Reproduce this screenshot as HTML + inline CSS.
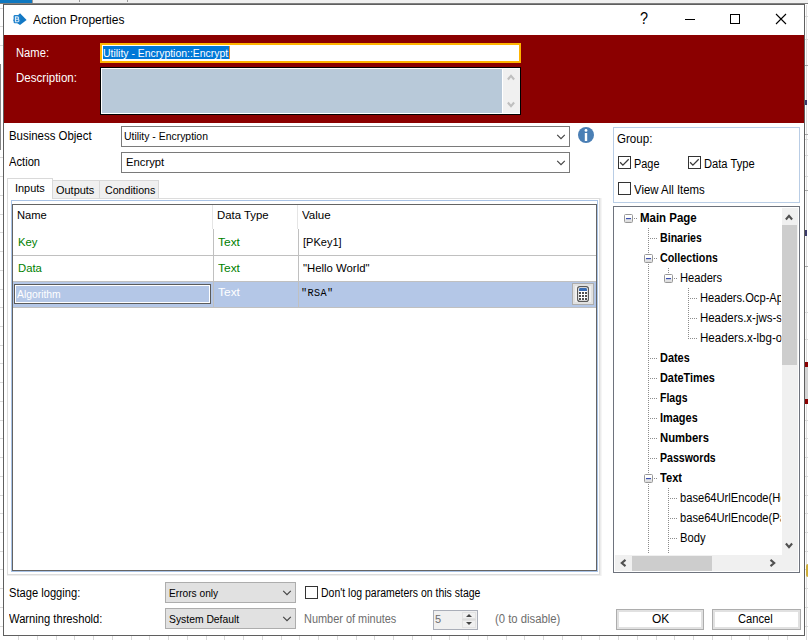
<!DOCTYPE html>
<html><head><meta charset="utf-8">
<style>
*{box-sizing:border-box;margin:0;padding:0}
html,body{width:808px;height:640px;overflow:hidden;background:#fff}
body{position:relative;font-family:"Liberation Sans",sans-serif;font-size:12px;color:#000}
.a{position:absolute}
.t{position:absolute;white-space:nowrap;line-height:14px;height:14px}
.s{font-size:12.5px}
.mono{font-family:"Liberation Mono",monospace;font-size:10.2px}
.m{font-size:11px}
.b{font-weight:bold}
.hl{position:absolute;background:#e4e4e4}
.vl{position:absolute;background:#d8d8d8}
.cb{position:absolute;width:13px;height:13px;border:1px solid #333;background:#fff}
.tl{position:absolute;width:1px;background:repeating-linear-gradient(to bottom,#8c8c8c 0,#8c8c8c 1px,transparent 1px,transparent 2px)}
.th{position:absolute;height:1px;background:repeating-linear-gradient(to right,#8c8c8c 0,#8c8c8c 1px,transparent 1px,transparent 2px)}
.ex{position:absolute;width:9px;height:9px;border:1px solid #989898;border-radius:1.5px;background:linear-gradient(#fff 30%,#d8d8d8)}
.ex:after{content:"";position:absolute;left:1px;top:3px;width:5px;height:1px;background:#3a50b0;box-shadow:0 0.5px 0 rgba(58,80,176,.4)}
</style></head><body>
<!-- background app remnants -->
<div class="a" style="left:0;top:0;width:808px;height:3px;background:#f0f0f0"></div>
<div class="a" style="left:0;top:0;width:32px;height:3px;background:#0f78c0"></div>
<div class="a" style="left:0;top:3px;width:808px;height:1px;background:#808080"></div>
<div class="a" style="left:32px;top:0;width:1px;height:3px;background:#9a9a9a"></div>
<div class="a" style="left:79px;top:0;width:1px;height:2px;background:#9a9a9a"></div>
<div class="a" style="left:127px;top:0;width:1px;height:2px;background:#9a9a9a"></div>
<div class="a" style="left:806px;top:5px;width:1px;height:635px;background:#dedede"></div>
<div class="a" style="left:0;top:8px;width:3px;height:1px;background:#d9d9d9"></div>
<div class="a" style="left:0;top:26px;width:3px;height:1px;background:#d9d9d9"></div>
<div class="a" style="left:0;top:45px;width:3px;height:1px;background:#d9d9d9"></div>
<div class="a" style="left:0;top:157px;width:3px;height:1px;background:#d9d9d9"></div>
<div class="a" style="left:0;top:176px;width:3px;height:1px;background:#d9d9d9"></div>
<div class="a" style="left:0;top:195px;width:3px;height:1px;background:#d9d9d9"></div>
<div class="a" style="left:0;top:214px;width:3px;height:1px;background:#d9d9d9"></div>
<div class="a" style="left:0;top:232px;width:3px;height:1px;background:#d9d9d9"></div>
<div class="a" style="left:0;top:251px;width:3px;height:1px;background:#d9d9d9"></div>
<div class="a" style="left:0;top:270px;width:3px;height:1px;background:#d9d9d9"></div>
<div class="a" style="left:0;top:289px;width:3px;height:1px;background:#d9d9d9"></div>
<div class="a" style="left:0;top:307px;width:3px;height:1px;background:#d9d9d9"></div>
<div class="a" style="left:0;top:326px;width:3px;height:1px;background:#d9d9d9"></div>
<div class="a" style="left:0;top:345px;width:3px;height:1px;background:#d9d9d9"></div>
<div class="a" style="left:0;top:363px;width:3px;height:1px;background:#d9d9d9"></div>
<div class="a" style="left:0;top:382px;width:3px;height:1px;background:#d9d9d9"></div>
<div class="a" style="left:0;top:401px;width:3px;height:1px;background:#d9d9d9"></div>
<div class="a" style="left:0;top:420px;width:3px;height:1px;background:#d9d9d9"></div>
<div class="a" style="left:805px;top:420px;width:3px;height:1px;background:#d9d9d9"></div>
<div class="a" style="left:0;top:438px;width:3px;height:1px;background:#d9d9d9"></div>
<div class="a" style="left:805px;top:438px;width:3px;height:1px;background:#d9d9d9"></div>
<div class="a" style="left:0;top:457px;width:3px;height:1px;background:#d9d9d9"></div>
<div class="a" style="left:805px;top:457px;width:3px;height:1px;background:#d9d9d9"></div>
<div class="a" style="left:0;top:476px;width:3px;height:1px;background:#d9d9d9"></div>
<div class="a" style="left:805px;top:476px;width:3px;height:1px;background:#d9d9d9"></div>
<div class="a" style="left:0;top:495px;width:3px;height:1px;background:#d9d9d9"></div>
<div class="a" style="left:805px;top:495px;width:3px;height:1px;background:#d9d9d9"></div>
<div class="a" style="left:0;top:513px;width:3px;height:1px;background:#d9d9d9"></div>
<div class="a" style="left:805px;top:513px;width:3px;height:1px;background:#d9d9d9"></div>
<div class="a" style="left:0;top:532px;width:3px;height:1px;background:#d9d9d9"></div>
<div class="a" style="left:805px;top:532px;width:3px;height:1px;background:#d9d9d9"></div>
<div class="a" style="left:0;top:551px;width:3px;height:1px;background:#d9d9d9"></div>
<div class="a" style="left:805px;top:551px;width:3px;height:1px;background:#d9d9d9"></div>
<div class="a" style="left:0;top:569px;width:3px;height:1px;background:#d9d9d9"></div>
<div class="a" style="left:805px;top:569px;width:3px;height:1px;background:#d9d9d9"></div>
<div class="a" style="left:0;top:588px;width:3px;height:1px;background:#d9d9d9"></div>
<div class="a" style="left:805px;top:588px;width:3px;height:1px;background:#d9d9d9"></div>
<div class="a" style="left:0;top:607px;width:3px;height:1px;background:#d9d9d9"></div>
<div class="a" style="left:805px;top:607px;width:3px;height:1px;background:#d9d9d9"></div>
<div class="a" style="left:0;top:626px;width:3px;height:1px;background:#d9d9d9"></div>
<div class="a" style="left:805px;top:626px;width:3px;height:1px;background:#d9d9d9"></div>
<div class="a" style="left:805px;top:16px;width:3px;height:1px;background:#d9d9d9"></div>
<div class="a" style="left:805px;top:39px;width:3px;height:1px;background:#d9d9d9"></div>
<div class="a" style="left:805px;top:65px;width:3px;height:1px;background:#a8a8a8"></div>
<div class="a" style="left:805px;top:134px;width:3px;height:1px;background:#a8a8a8"></div>
<div class="a" style="left:805px;top:139px;width:3px;height:1px;background:#d9d9d9"></div>
<div class="a" style="left:805px;top:155px;width:3px;height:1px;background:#d9d9d9"></div>
<div class="a" style="left:805px;top:176px;width:3px;height:1px;background:#d9d9d9"></div>
<div class="a" style="left:805px;top:190px;width:3px;height:1px;background:#a8a8a8"></div>
<div class="a" style="left:805px;top:266px;width:3px;height:1px;background:#a8a8a8"></div>
<div class="a" style="left:805px;top:312px;width:3px;height:1px;background:#d9d9d9"></div>
<div class="a" style="left:805px;top:339px;width:3px;height:1px;background:#d9d9d9"></div>
<div class="a" style="left:0;top:64px;width:1px;height:86px;background:#858585"></div>
<div class="a" style="left:805px;top:362px;width:3px;height:42px;background:#8b0000"></div>
<div class="a" style="left:805px;top:367px;width:3px;height:32px;background:#d4d4d4"></div>
<div class="a" style="left:805px;top:100px;width:2px;height:5px;background:#3a3a6a"></div>
<div class="a" style="left:805px;top:230px;width:2px;height:6px;background:#3a3a6a"></div>
<div class="a" style="left:806px;top:564px;width:2px;height:13px;background:#cfae3a;border-radius:2px 0 0 2px"></div>
<div class="a" style="left:18px;top:636px;width:1px;height:4px;background:#d9d9d9"></div>
<div class="a" style="left:37px;top:636px;width:1px;height:4px;background:#d9d9d9"></div>
<div class="a" style="left:56px;top:636px;width:1px;height:4px;background:#d9d9d9"></div>
<div class="a" style="left:74px;top:636px;width:1px;height:4px;background:#d9d9d9"></div>
<div class="a" style="left:93px;top:636px;width:1px;height:4px;background:#d9d9d9"></div>
<div class="a" style="left:112px;top:636px;width:1px;height:4px;background:#d9d9d9"></div>
<div class="a" style="left:131px;top:636px;width:1px;height:4px;background:#d9d9d9"></div>
<div class="a" style="left:149px;top:636px;width:1px;height:4px;background:#d9d9d9"></div>
<div class="a" style="left:168px;top:636px;width:1px;height:4px;background:#d9d9d9"></div>
<div class="a" style="left:187px;top:636px;width:1px;height:4px;background:#d9d9d9"></div>
<div class="a" style="left:206px;top:636px;width:1px;height:4px;background:#d9d9d9"></div>
<div class="a" style="left:224px;top:636px;width:1px;height:4px;background:#d9d9d9"></div>
<div class="a" style="left:243px;top:636px;width:1px;height:4px;background:#d9d9d9"></div>
<div class="a" style="left:262px;top:636px;width:1px;height:4px;background:#d9d9d9"></div>
<div class="a" style="left:281px;top:636px;width:1px;height:4px;background:#d9d9d9"></div>
<div class="a" style="left:299px;top:636px;width:1px;height:4px;background:#d9d9d9"></div>
<div class="a" style="left:318px;top:636px;width:1px;height:4px;background:#d9d9d9"></div>
<div class="a" style="left:337px;top:636px;width:1px;height:4px;background:#d9d9d9"></div>
<div class="a" style="left:356px;top:636px;width:1px;height:4px;background:#d9d9d9"></div>
<div class="a" style="left:374px;top:636px;width:1px;height:4px;background:#d9d9d9"></div>
<div class="a" style="left:393px;top:636px;width:1px;height:4px;background:#d9d9d9"></div>
<div class="a" style="left:412px;top:636px;width:1px;height:4px;background:#d9d9d9"></div>
<div class="a" style="left:431px;top:636px;width:1px;height:4px;background:#d9d9d9"></div>
<div class="a" style="left:449px;top:636px;width:1px;height:4px;background:#d9d9d9"></div>
<div class="a" style="left:468px;top:636px;width:1px;height:4px;background:#d9d9d9"></div>
<div class="a" style="left:487px;top:636px;width:1px;height:4px;background:#d9d9d9"></div>
<div class="a" style="left:506px;top:636px;width:1px;height:4px;background:#d9d9d9"></div>
<div class="a" style="left:524px;top:636px;width:1px;height:4px;background:#d9d9d9"></div>
<div class="a" style="left:543px;top:636px;width:1px;height:4px;background:#d9d9d9"></div>
<div class="a" style="left:562px;top:636px;width:1px;height:4px;background:#d9d9d9"></div>
<div class="a" style="left:581px;top:636px;width:1px;height:4px;background:#d9d9d9"></div>
<div class="a" style="left:599px;top:636px;width:1px;height:4px;background:#d9d9d9"></div>
<div class="a" style="left:618px;top:636px;width:1px;height:4px;background:#d9d9d9"></div>
<div class="a" style="left:637px;top:636px;width:1px;height:4px;background:#d9d9d9"></div>
<div class="a" style="left:656px;top:636px;width:1px;height:4px;background:#d9d9d9"></div>
<div class="a" style="left:674px;top:636px;width:1px;height:4px;background:#d9d9d9"></div>
<div class="a" style="left:693px;top:636px;width:1px;height:4px;background:#d9d9d9"></div>
<div class="a" style="left:712px;top:636px;width:1px;height:4px;background:#d9d9d9"></div>
<div class="a" style="left:731px;top:636px;width:1px;height:4px;background:#d9d9d9"></div>
<div class="a" style="left:749px;top:636px;width:1px;height:4px;background:#d9d9d9"></div>
<div class="a" style="left:768px;top:636px;width:1px;height:4px;background:#d9d9d9"></div>
<div class="a" style="left:787px;top:636px;width:1px;height:4px;background:#d9d9d9"></div>
<div class="a" style="left:806px;top:636px;width:1px;height:4px;background:#d9d9d9"></div>
<!-- dialog frame -->
<div class="a" id="dlg" style="left:3px;top:4px;width:802px;height:632px;border:1px solid #5f5f5f;background:#fff"></div>
<!-- title -->
<svg class="a" style="left:12px;top:12px" width="16" height="15" viewBox="0 0 16 15">
<path d="M8 1.2L14.6 8.1L8 13L1 8.3Z" fill="#1278c4"/>
<rect x="1.6" y="3.1" width="6.8" height="8.2" rx="1.2" fill="#1f82cc"/>
<path d="M3.5 4.9h1.9a1.15 1.15 0 0 1 0 2.3h-1.9zM3.5 7.2h2.2a1.25 1.25 0 0 1 0 2.5h-2.2z" fill="none" stroke="#d6e8f7" stroke-width="1.15"/>
</svg>
<div class="a" style="left:639.5px;top:11px;font-size:16px;line-height:16px;white-space:nowrap;transform:scaleX(0.9);transform-origin:0 0">?</div>
<div class="a" style="left:685px;top:19px;width:10px;height:1px;background:#000"></div>
<div class="a" style="left:730px;top:14px;width:10px;height:10px;border:1px solid #000"></div>
<svg class="a" style="left:775px;top:13px" width="12" height="12" viewBox="0 0 12 12"><path d="M1 1L11 11M11 1L1 11" stroke="#000" stroke-width="1.1" fill="none"/></svg>
<!-- red banner -->
<div class="a" style="left:4px;top:35px;width:800px;height:88px;background:#8b0000"></div>
<div class="a" style="left:100px;top:43px;width:421px;height:20px;border:2px solid #ffb400;background:#fff"></div>
<div class="a" style="left:103px;top:46px;width:126px;height:13px;background:#0078d7"></div><div class="a" style="left:229px;top:46px;width:1px;height:13px;background:#ee8a1e"></div>
<div class="a" style="left:100px;top:67px;width:421px;height:48px;border:1px solid #000;background:#fff"></div>
<div class="a" style="left:102px;top:69px;width:400px;height:44px;background:#b8c9d9"></div>
<div class="a" style="left:503px;top:69px;width:17px;height:44px;background:#f0f0f0"></div>
<svg class="a" style="left:506.6px;top:73.3px" width="8" height="8" viewBox="0 0 8 8"><path d="M0.9 6.5L4 2.8L7.1 6.5" stroke="#bfbfbf" stroke-width="2.1" fill="none"/></svg>
<svg class="a" style="left:506.6px;top:101px" width="8" height="8" viewBox="0 0 8 8"><path d="M0.9 1.5L4 5.2L7.1 1.5" stroke="#bfbfbf" stroke-width="2.1" fill="none"/></svg>
<!-- business object / action -->
<div class="a" style="left:121px;top:126px;width:449px;height:21px;border:1px solid #7a7a7a;background:#fff"></div>
<div class="a" style="left:121px;top:152px;width:449px;height:21px;border:1px solid #7a7a7a;background:#fff"></div>
<svg class="a" style="left:556px;top:134px" width="10" height="6" viewBox="0 0 10 6"><path d="M1.2 0.9L5 4.7L8.8 0.9" stroke="#444" stroke-width="1.15" fill="none"/></svg>
<svg class="a" style="left:556px;top:160px" width="10" height="6" viewBox="0 0 10 6"><path d="M1.2 0.9L5 4.7L8.8 0.9" stroke="#444" stroke-width="1.15" fill="none"/></svg>
<svg class="a" style="left:578px;top:127px" width="16" height="16" viewBox="0 0 16 16"><circle cx="8" cy="8" r="8" fill="#4a7fb5"/><circle cx="8" cy="3.4" r="1.4" fill="#fff"/><rect x="6.8" y="6" width="2.4" height="8" fill="#fff"/></svg>
<!-- tabs -->
<div class="a" style="left:7px;top:198px;width:595px;height:378px;background:#fff;border-left:1px solid #dcdcdc;border-top:1px solid #dcdcdc"></div>
<div class="a" style="left:599px;top:198px;width:1px;height:377px;background:#dcdcdc"></div>
<div class="a" style="left:600px;top:198px;width:1px;height:378px;background:#ebebeb"></div>
<div class="a" style="left:601px;top:198px;width:1px;height:378px;background:#f5f5f5"></div>
<div class="a" style="left:7px;top:574px;width:593px;height:1px;background:#dcdcdc"></div>
<div class="a" style="left:7px;top:575px;width:594px;height:1px;background:#efefef"></div>
<div class="a" style="left:52px;top:180px;width:48px;height:18px;border:1px solid #d9d9d9;border-bottom:none;background:#f0f0f0"></div>
<div class="a" style="left:99px;top:180px;width:60px;height:18px;border:1px solid #d9d9d9;border-bottom:none;background:#f0f0f0"></div>
<div class="a" style="left:7px;top:178px;width:46px;height:21px;border:1px solid #d9d9d9;border-bottom:none;background:#fff"></div>
<!-- list -->
<div class="a" style="left:11px;top:200px;width:587px;height:372px;border:1px solid #a9c3e6;background:#fff"></div>
<div class="a" style="left:12px;top:204px;width:585px;height:367px;border:1px solid #646464;background:#fff"></div>
<div class="a" style="left:212px;top:205px;width:1px;height:24px;background:#e5e5e5"></div>
<div class="a" style="left:297px;top:205px;width:1px;height:24px;background:#e5e5e5"></div>
<div class="a" style="left:213px;top:229px;width:1px;height:78px;background:#c0c0c0"></div>
<div class="a" style="left:298px;top:229px;width:1px;height:78px;background:#c0c0c0"></div>
<div class="a" style="left:13px;top:255px;width:583px;height:1px;background:#c0c0c0"></div>
<div class="a" style="left:13px;top:281px;width:583px;height:1px;background:#c0c0c0"></div>
<div class="a" style="left:13px;top:307px;width:583px;height:1px;background:#c0c0c0"></div>
<div class="a" style="left:13px;top:282px;width:200px;height:25px;background:#b4c7e7"></div>
<div class="a" style="left:214px;top:282px;width:84px;height:25px;background:#b4c7e7"></div>
<div class="a" style="left:299px;top:282px;width:297px;height:25px;background:#b4c7e7"></div>
<div class="a" style="left:14px;top:284px;width:197px;height:20px;border:1px solid #5a5a5a;box-shadow:inset 0 0 0 1px #fff;background:#b4c7e7"></div>
<div class="a" style="left:572px;top:283px;width:22px;height:22px;border:1px solid #adadad;background:#f0f0f0;box-shadow:inset 0 0 0 2px #e1e1e1"></div>
<svg class="a" style="left:577px;top:286px" width="12" height="16" viewBox="0 0 12 16"><rect x="0.6" y="0.6" width="10.8" height="14.8" rx="2.2" fill="#fff" stroke="#5a5a5a" stroke-width="1.2"/><path d="M2 5V3.2a1.2 1.2 0 0 1 1.2-1.2h5.6a1.2 1.2 0 0 1 1.2 1.2V5z" fill="#3a6db5"/>
<g fill="#505050"><rect x="2" y="6" width="2" height="2"/><rect x="5" y="6" width="2" height="2"/><rect x="8" y="6" width="2" height="2"/><rect x="2" y="9" width="2" height="2"/><rect x="5" y="9" width="2" height="2"/><rect x="8" y="9" width="2" height="2"/><rect x="2" y="12" width="2" height="2"/><rect x="5" y="12" width="2" height="2"/><rect x="8" y="12" width="2" height="2"/></g></svg>
<!-- group box -->
<div class="a" style="left:613px;top:127px;width:187px;height:76px;border:1px solid #b9cde5;background:#fff"></div>
<div class="cb" style="left:618px;top:156px"></div>
<div class="cb" style="left:688px;top:156px"></div>
<div class="cb" style="left:618px;top:182px"></div>
<svg class="a" style="left:619px;top:157px" width="11" height="11" viewBox="0 0 11 11"><path d="M1.1 5.3L3.9 8.1L9.7 2.3" stroke="#3a3a3a" stroke-width="1.3" fill="none"/></svg>
<svg class="a" style="left:689px;top:157px" width="11" height="11" viewBox="0 0 11 11"><path d="M1.1 5.3L3.9 8.1L9.7 2.3" stroke="#3a3a3a" stroke-width="1.3" fill="none"/></svg>
<div class="a" style="left:613px;top:206px;width:187px;height:367px;border:1px solid #6e737d;background:#fff"></div>
<!-- bottom -->
<div class="a" style="left:165px;top:582px;width:131px;height:21px;border:1px solid #adadad;background:#e1e1e1"></div>
<div class="a" style="left:165px;top:608px;width:131px;height:21px;border:1px solid #adadad;background:#e1e1e1"></div>
<svg class="a" style="left:282px;top:590px" width="10" height="6" viewBox="0 0 10 6"><path d="M1.2 0.9L5 4.7L8.8 0.9" stroke="#444" stroke-width="1.15" fill="none"/></svg>
<svg class="a" style="left:282px;top:616px" width="10" height="6" viewBox="0 0 10 6"><path d="M1.2 0.9L5 4.7L8.8 0.9" stroke="#444" stroke-width="1.15" fill="none"/></svg>
<div class="cb" style="left:305px;top:586px"></div>
<div class="a" style="left:433px;top:610px;width:45px;height:20px;border:1px solid #aaaeb8;background:#f0f0f0"></div>
<div class="a" style="left:462px;top:612px;width:14px;height:7px;border:1px solid #e2e2e2;background:#f0f0f0"></div>
<div class="a" style="left:462px;top:619px;width:14px;height:1px;background:#dcdcdc"></div>
<div class="a" style="left:462px;top:620px;width:14px;height:8px;border:1px solid #e2e2e2;background:#f0f0f0"></div>
<svg class="a" style="left:465.5px;top:614px" width="6" height="3" viewBox="0 0 6 3"><path d="M0 3L3 0L6 3Z" fill="#444"/></svg>
<svg class="a" style="left:465.5px;top:622px" width="6" height="3" viewBox="0 0 6 3"><path d="M0 0L3 3L6 0Z" fill="#444"/></svg>
<div class="a" style="left:616px;top:609px;width:88px;height:21px;border:1px solid #adadad;background:#fff;box-shadow:inset 0 0 0 2px #e1e1e1"></div>
<div class="a" style="left:712px;top:609px;width:89px;height:21px;border:1px solid #adadad;background:#fff;box-shadow:inset 0 0 0 2px #e1e1e1"></div>

<div class="tl" style="left:648px;top:228px;height:326px"></div>
<div class="tl" style="left:668px;top:268px;height:5px"></div>
<div class="tl" style="left:688px;top:288px;height:51px"></div>
<div class="tl" style="left:668px;top:488px;height:66px"></div>
<div class="th" style="left:634px;top:218px;width:3px"></div>
<div class="ex" style="left:624px;top:214px"></div>
<div class="th" style="left:650px;top:238px;width:7px"></div>
<div class="th" style="left:654px;top:258px;width:3px"></div>
<div class="ex" style="left:644px;top:254px"></div>
<div class="th" style="left:674px;top:278px;width:3px"></div>
<div class="ex" style="left:664px;top:274px"></div>
<div class="th" style="left:690px;top:298px;width:7px"></div>
<div class="th" style="left:690px;top:318px;width:7px"></div>
<div class="th" style="left:690px;top:338px;width:7px"></div>
<div class="th" style="left:650px;top:358px;width:7px"></div>
<div class="th" style="left:650px;top:378px;width:7px"></div>
<div class="th" style="left:650px;top:398px;width:7px"></div>
<div class="th" style="left:650px;top:418px;width:7px"></div>
<div class="th" style="left:650px;top:438px;width:7px"></div>
<div class="th" style="left:650px;top:458px;width:7px"></div>
<div class="th" style="left:654px;top:478px;width:3px"></div>
<div class="ex" style="left:644px;top:474px"></div>
<div class="th" style="left:670px;top:498px;width:7px"></div>
<div class="th" style="left:670px;top:518px;width:7px"></div>
<div class="th" style="left:670px;top:538px;width:7px"></div>
<div class="a" style="left:782px;top:208px;width:16px;height:347px;background:#f0f0f0"></div>
<div class="a" style="left:782px;top:225px;width:15px;height:140px;background:#cdcdcd"></div>
<svg class="a" style="left:785px;top:213px" width="8" height="8" viewBox="0 0 8 8"><path d="M0.9 6.5L4 2.8L7.1 6.5" stroke="#505050" stroke-width="2.1" fill="none"/></svg>
<svg class="a" style="left:785px;top:542px" width="8" height="8" viewBox="0 0 8 8"><path d="M0.9 1.5L4 5.2L7.1 1.5" stroke="#505050" stroke-width="2.1" fill="none"/></svg>
<div class="a" style="left:615px;top:555px;width:183px;height:16px;background:#f0f0f0"></div>
<div class="a" style="left:632px;top:556px;width:80px;height:15px;background:#cdcdcd"></div>
<svg class="a" style="left:619px;top:558.5px" width="8" height="8" viewBox="0 0 8 8"><path d="M6.5 0.9L2.8 4L6.5 7.1" stroke="#505050" stroke-width="2.1" fill="none"/></svg>
<svg class="a" style="left:769px;top:558.5px" width="8" height="8" viewBox="0 0 8 8"><path d="M1.5 0.9L5.2 4L1.5 7.1" stroke="#505050" stroke-width="2.1" fill="none"/></svg>

<span class="t s" id="ttl" style="left:33px;top:13.0px;;display:inline-block;transform-origin:0 50%;transform:scaleX(0.9604);">Action Properties</span>
<span class="t s" id="lname" style="left:16px;top:46.0px;color:#fff;display:inline-block;transform-origin:0 50%;transform:scaleX(0.8963);">Name:</span>
<span class="t s" id="ldesc" style="left:16px;top:71.0px;color:#fff;display:inline-block;transform-origin:0 50%;transform:scaleX(0.9237);">Description:</span>
<span class="t m" id="vname" style="left:103px;top:46.0px;color:#fff;display:inline-block;transform-origin:0 50%;transform:scaleX(0.9480);">Utility - Encryption::Encrypt</span>
<span class="t s" id="lbo" style="left:9px;top:129.0px;;display:inline-block;transform-origin:0 50%;transform:scaleX(0.9142);">Business Object</span>
<span class="t s" id="lact" style="left:9px;top:155.0px;;display:inline-block;transform-origin:0 50%;transform:scaleX(0.8942);">Action</span>
<span class="t m" id="vbo" style="left:124px;top:129.0px;;display:inline-block;transform-origin:0 50%;transform:scaleX(0.9469);">Utility - Encryption</span>
<span class="t m" id="vact" style="left:126px;top:155.0px;;display:inline-block;transform-origin:0 50%;transform:scaleX(1.0248);">Encrypt</span>
<span class="t m" id="tab1" style="left:15px;top:181.0px;;display:inline-block;transform-origin:0 50%;transform:scaleX(0.9925);">Inputs</span>
<span class="t m" id="tab2" style="left:56px;top:183.0px;;display:inline-block;transform-origin:0 50%;transform:scaleX(0.9952);">Outputs</span>
<span class="t m" id="tab3" style="left:105px;top:183.0px;;display:inline-block;transform-origin:0 50%;transform:scaleX(0.9681);">Conditions</span>
<span class="t m" id="h1" style="left:17px;top:208.0px;;display:inline-block;transform-origin:0 50%;transform:scaleX(1.0157);">Name</span>
<span class="t m" id="h2" style="left:217px;top:208.0px;;display:inline-block;transform-origin:0 50%;transform:scaleX(1.0354);">Data Type</span>
<span class="t m" id="h3" style="left:302px;top:208.0px;;display:inline-block;transform-origin:0 50%;transform:scaleX(1.0512);">Value</span>
<span class="t m" id="r1a" style="left:18px;top:235.0px;color:#008000;display:inline-block;transform-origin:0 50%;transform:scaleX(1.0274);">Key</span>
<span class="t m" id="r1b" style="left:218px;top:235.0px;color:#008000;display:inline-block;transform-origin:0 50%;transform:scaleX(1.0874);">Text</span>
<span class="t m" id="r1c" style="left:303px;top:235.0px;;display:inline-block;transform-origin:0 50%;transform:scaleX(1.0013);">[PKey1]</span>
<span class="t m" id="r2a" style="left:18px;top:261.0px;color:#008000;display:inline-block;transform-origin:0 50%;transform:scaleX(1.0266);">Data</span>
<span class="t m" id="r2b" style="left:218px;top:261.0px;color:#008000;display:inline-block;transform-origin:0 50%;transform:scaleX(1.0874);">Text</span>
<span class="t m" id="r2c" style="left:303px;top:261.0px;;display:inline-block;transform-origin:0 50%;transform:scaleX(1.0315);">&quot;Hello World&quot;</span>
<span class="t m" id="r3a" style="left:17px;top:287.0px;color:#fff;display:inline-block;transform-origin:0 50%;transform:scaleX(0.9408);">Algorithm</span>
<span class="t m" id="r3b" style="left:218px;top:285.0px;color:#fff;display:inline-block;transform-origin:0 50%;transform:scaleX(1.0874);">Text</span>
<span class="t mono" id="r3c" style="left:301px;top:287.0px;;letter-spacing:0.372px;">&quot;RSA&quot;</span>
<span class="t s" id="g0" style="left:617px;top:131.5px;;display:inline-block;transform-origin:0 50%;transform:scaleX(0.9247);">Group:</span>
<span class="t s" id="g1" style="left:634px;top:156.5px;;display:inline-block;transform-origin:0 50%;transform:scaleX(0.8716);">Page</span>
<span class="t s" id="g2" style="left:704px;top:156.5px;;display:inline-block;transform-origin:0 50%;transform:scaleX(0.8916);">Data Type</span>
<span class="t s" id="g3" style="left:634px;top:182.5px;;display:inline-block;transform-origin:0 50%;transform:scaleX(0.9122);">View All Items</span>
<span class="t s" id="b1" style="left:9px;top:586.0px;;display:inline-block;transform-origin:0 50%;transform:scaleX(0.8914);">Stage logging:</span>
<span class="t s" id="b2" style="left:9px;top:612.0px;;display:inline-block;transform-origin:0 50%;transform:scaleX(0.8945);">Warning threshold:</span>
<span class="t m" id="b3" style="left:169px;top:586.0px;;display:inline-block;transform-origin:0 50%;transform:scaleX(0.9246);">Errors only</span>
<span class="t m" id="b4" style="left:169px;top:612.0px;;display:inline-block;transform-origin:0 50%;transform:scaleX(0.9409);">System Default</span>
<span class="t s" id="b5" style="left:321px;top:586.0px;;display:inline-block;transform-origin:0 50%;transform:scaleX(0.8391);">Don't log parameters on this stage</span>
<span class="t s" id="b6" style="left:304px;top:612.0px;color:#6d6d6d;display:inline-block;transform-origin:0 50%;transform:scaleX(0.8744);">Number of minutes</span>
<span class="t m" id="b7" style="left:435px;top:612.0px;color:#6d6d6d;display:inline-block;transform-origin:0 50%;transform:scaleX(1.0000);">5</span>
<span class="t s" id="b8" style="left:495px;top:612.0px;color:#6d6d6d;display:inline-block;transform-origin:0 50%;transform:scaleX(0.9027);">(0 to disable)</span>
<span class="t s" id="ok" style="left:652px;top:612.0px;;display:inline-block;transform-origin:0 50%;transform:scaleX(0.9558);">OK</span>
<span class="t s" id="cancel" style="left:738px;top:612.0px;;display:inline-block;transform-origin:0 50%;transform:scaleX(0.8927);">Cancel</span>
<span class="t s b" id="tr0" style="left:640px;top:211.0px;;display:inline-block;transform-origin:0 50%;transform:scaleX(0.9176);max-width:153.66px;overflow:hidden;">Main Page</span>
<span class="t s b" id="tr1" style="left:660px;top:231.0px;;display:inline-block;transform-origin:0 50%;transform:scaleX(0.8502);max-width:142.31px;overflow:hidden;">Binaries</span>
<span class="t s b" id="tr2" style="left:660px;top:251.0px;;display:inline-block;transform-origin:0 50%;transform:scaleX(0.8604);max-width:140.63px;overflow:hidden;">Collections</span>
<span class="t s" id="tr3" style="left:680px;top:271.0px;;display:inline-block;transform-origin:0 50%;transform:scaleX(0.8912);max-width:113.33px;overflow:hidden;">Headers</span>
<span class="t s" id="tr4" style="left:700px;top:291.0px;;display:inline-block;transform-origin:0 50%;transform:scaleX(0.8912);max-width:90.89px;overflow:hidden;">Headers.Ocp-Apim</span>
<span class="t s" id="tr5" style="left:700px;top:311.0px;;display:inline-block;transform-origin:0 50%;transform:scaleX(0.9143);max-width:88.59px;overflow:hidden;">Headers.x-jws-signature</span>
<span class="t s" id="tr6" style="left:700px;top:331.0px;;display:inline-block;transform-origin:0 50%;transform:scaleX(0.9250);max-width:87.56px;overflow:hidden;">Headers.x-lbg-org</span>
<span class="t s b" id="tr7" style="left:660px;top:351.0px;;display:inline-block;transform-origin:0 50%;transform:scaleX(0.8744);max-width:138.38px;overflow:hidden;">Dates</span>
<span class="t s b" id="tr8" style="left:660px;top:371.0px;;display:inline-block;transform-origin:0 50%;transform:scaleX(0.8711);max-width:138.91px;overflow:hidden;">DateTimes</span>
<span class="t s b" id="tr9" style="left:660px;top:391.0px;;display:inline-block;transform-origin:0 50%;transform:scaleX(0.8417);max-width:143.75px;overflow:hidden;">Flags</span>
<span class="t s b" id="tr10" style="left:660px;top:411.0px;;display:inline-block;transform-origin:0 50%;transform:scaleX(0.8763);max-width:138.08px;overflow:hidden;">Images</span>
<span class="t s b" id="tr11" style="left:660px;top:431.0px;;display:inline-block;transform-origin:0 50%;transform:scaleX(0.9043);max-width:133.81px;overflow:hidden;">Numbers</span>
<span class="t s b" id="tr12" style="left:660px;top:451.0px;;display:inline-block;transform-origin:0 50%;transform:scaleX(0.8446);max-width:143.27px;overflow:hidden;">Passwords</span>
<span class="t s b" id="tr13" style="left:660px;top:471.0px;;display:inline-block;transform-origin:0 50%;transform:scaleX(0.8904);max-width:135.89px;overflow:hidden;">Text</span>
<span class="t s" id="tr14" style="left:680px;top:491.0px;;display:inline-block;transform-origin:0 50%;transform:scaleX(0.8912);max-width:113.33px;overflow:hidden;">base64UrlEncode(Header)</span>
<span class="t s" id="tr15" style="left:680px;top:511.0px;;display:inline-block;transform-origin:0 50%;transform:scaleX(0.8912);max-width:113.33px;overflow:hidden;">base64UrlEncode(Payload)</span>
<span class="t s" id="tr16" style="left:680px;top:531.0px;;display:inline-block;transform-origin:0 50%;transform:scaleX(0.8973);max-width:112.56px;overflow:hidden;">Body</span>
</body></html>
